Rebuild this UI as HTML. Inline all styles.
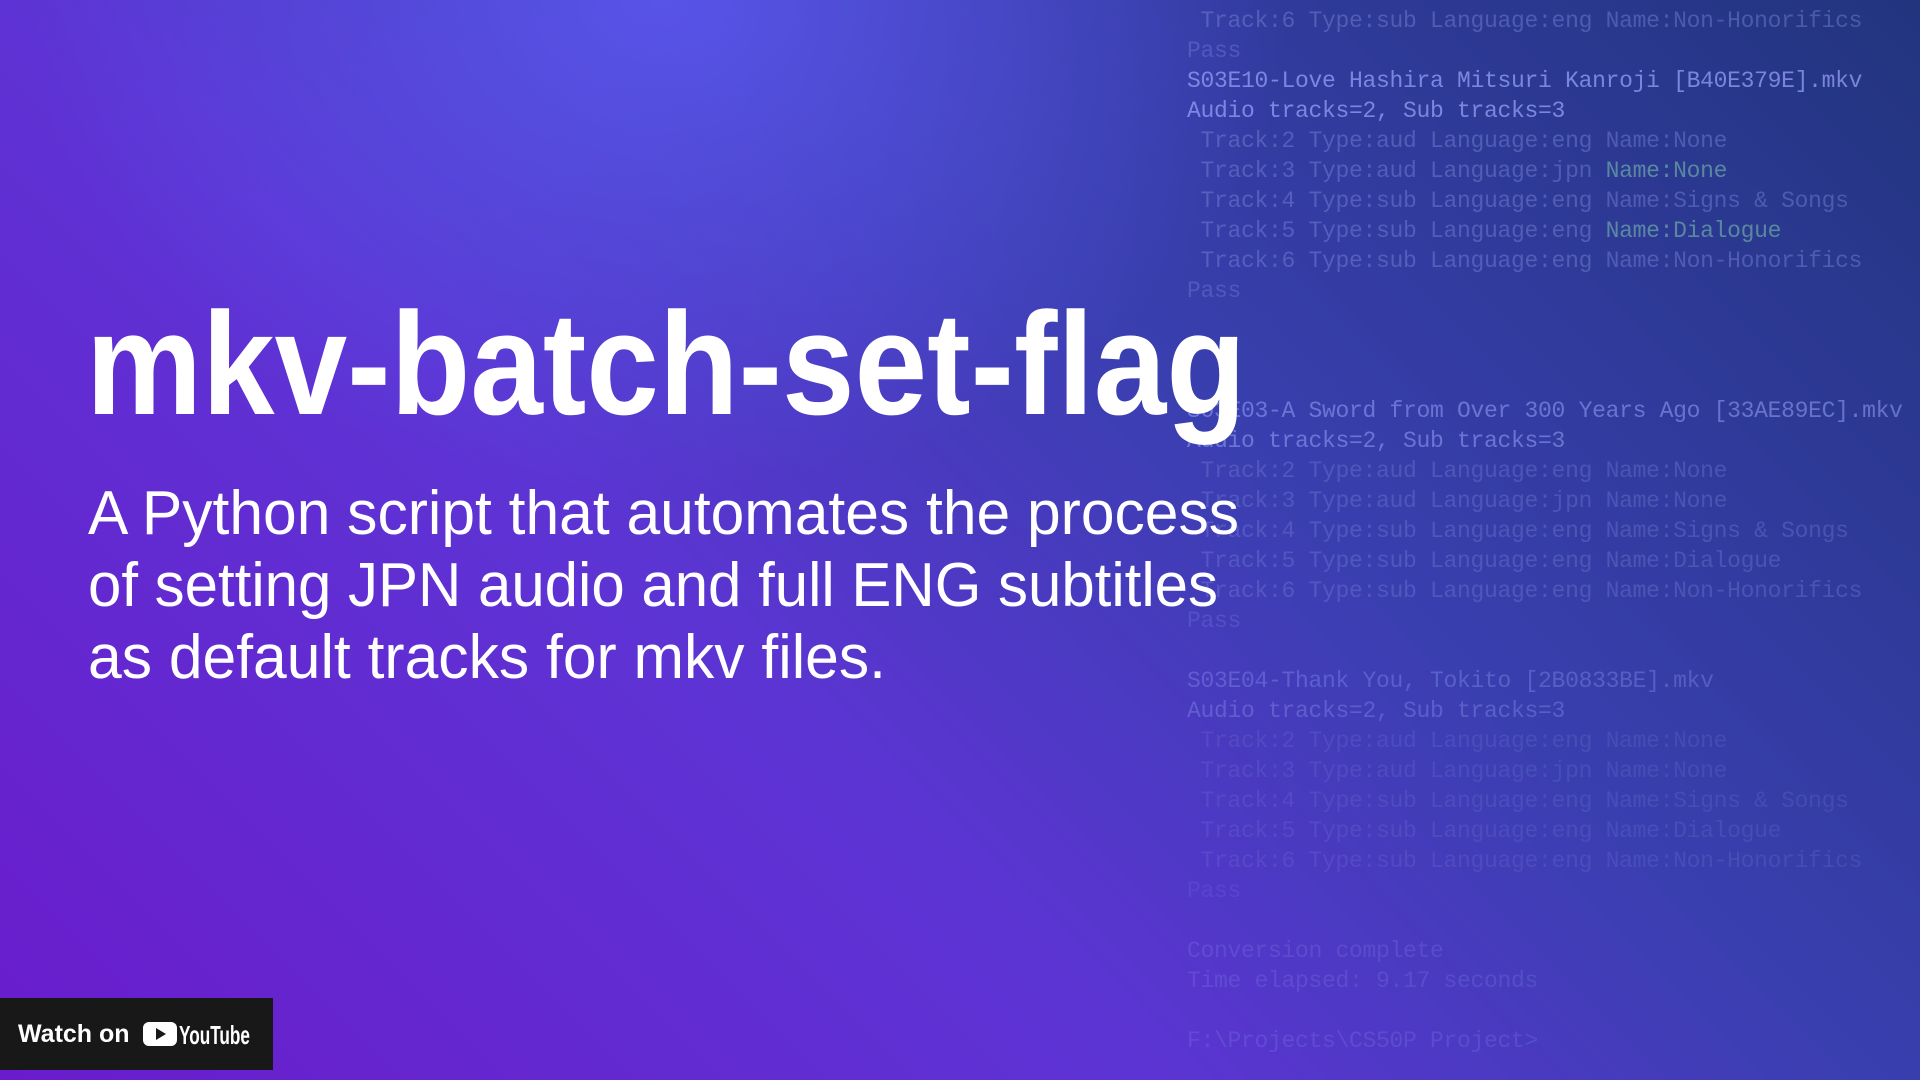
<!DOCTYPE html>
<html><head><meta charset="utf-8"><style>
html,body{margin:0;padding:0;width:1920px;height:1080px;overflow:hidden}
body{position:relative;background:#5a3ad8;
background:
radial-gradient(ellipse 900px 700px at 660px 0px, rgba(90,85,235,0.95), rgba(90,85,235,0) 70%),
linear-gradient(225deg,#22347e 0%,#3a3fb0 38%,#5d34d4 62%,#6a1ccc 100%);}
.term{position:absolute;left:1187px;top:6px;font-family:"Liberation Mono",monospace;font-size:23px;line-height:30px;letter-spacing:-0.3px}
.term p{margin:0;height:30px;line-height:30px;white-space:pre}
.h{color:rgba(150,160,245,0.75)}
.t{color:rgba(140,150,230,0.38)}
.g{color:rgba(120,190,170,0.6)}
.p{color:rgba(130,140,230,0.35)}
.f1{opacity:0.75}.f2{opacity:0.45}.f3{opacity:0.25}
svg.main{position:absolute;left:0;top:0}
.yt{position:absolute;left:0;top:998px;width:273px;height:72px;background:#181818}
.yt span{position:absolute;left:18px;top:22px;font-family:"Liberation Sans",sans-serif;font-size:25px;color:#fff;font-weight:bold}
</style></head><body>
<div class="term">
<p class="t"> Track:6 Type:sub Language:eng Name:Non-Honorifics</p>
<p class="p">Pass</p>
<p class="h">S03E10-Love Hashira Mitsuri Kanroji [B40E379E].mkv</p>
<p class="h">Audio tracks=2, Sub tracks=3</p>
<p class="t"> Track:2 Type:aud Language:eng Name:None</p>
<p class="t"> Track:3 Type:aud Language:jpn <span class="g">Name:None</span></p>
<p class="t"> Track:4 Type:sub Language:eng Name:Signs &amp; Songs</p>
<p class="t"> Track:5 Type:sub Language:eng <span class="g">Name:Dialogue</span></p>
<p class="t"> Track:6 Type:sub Language:eng Name:Non-Honorifics</p>
<p class="p">Pass</p>
<p></p><p></p><p></p>
<div class="f1"><p class="h">S03E03-A Sword from Over 300 Years Ago [33AE89EC].mkv</p>
<p class="h">Audio tracks=2, Sub tracks=3</p>
<p class="t"> Track:2 Type:aud Language:eng Name:None</p>
<p class="t"> Track:3 Type:aud Language:jpn Name:None</p>
<p class="t"> Track:4 Type:sub Language:eng Name:Signs &amp; Songs</p>
<p class="t"> Track:5 Type:sub Language:eng Name:Dialogue</p>
<p class="t"> Track:6 Type:sub Language:eng Name:Non-Honorifics</p>
<p class="p">Pass</p></div>
<p></p>
<div class="f2"><p class="h">S03E04-Thank You, Tokito [2B0833BE].mkv</p>
<p class="h">Audio tracks=2, Sub tracks=3</p>
<p class="t"> Track:2 Type:aud Language:eng Name:None</p>
<p class="t"> Track:3 Type:aud Language:jpn Name:None</p>
<p class="t"> Track:4 Type:sub Language:eng Name:Signs &amp; Songs</p>
<p class="t"> Track:5 Type:sub Language:eng Name:Dialogue</p>
<p class="t"> Track:6 Type:sub Language:eng Name:Non-Honorifics</p>
<p class="p">Pass</p></div>
<p></p>
<div class="f3"><p class="h">Conversion complete</p>
<p class="h">Time elapsed: 9.17 seconds</p>
<p></p>
<p class="h">F:\Projects\CS50P Project&gt;</p></div>
</div>
<svg class="main" width="1920" height="1080" font-family="Liberation Sans, sans-serif" fill="#fff">
<text x="86" y="414" font-size="146" font-weight="bold" textLength="1160" lengthAdjust="spacingAndGlyphs">mkv-batch-set-flag</text>
<text x="88" y="534" font-size="62" textLength="1151" lengthAdjust="spacingAndGlyphs">A Python script that automates the process</text>
<text x="88" y="606" font-size="62" textLength="1130" lengthAdjust="spacingAndGlyphs">of setting JPN audio and full ENG subtitles</text>
<text x="88" y="678" font-size="62" textLength="798" lengthAdjust="spacingAndGlyphs">as default tracks for mkv files.</text>
</svg>
<div class="yt"><span>Watch on</span>
<svg style="position:absolute;left:143px;top:22px" width="112" height="28">
<rect x="0" y="2" width="34" height="24" rx="6" fill="#fff"/>
<path d="M13 8 L23 14 L13 20Z" fill="#181818"/>
<text x="36" y="24" font-family="Liberation Sans Narrow, Liberation Sans, sans-serif" font-weight="bold" font-size="26" fill="#fff" textLength="71" lengthAdjust="spacingAndGlyphs">YouTube</text>
</svg></div>
</body></html>
